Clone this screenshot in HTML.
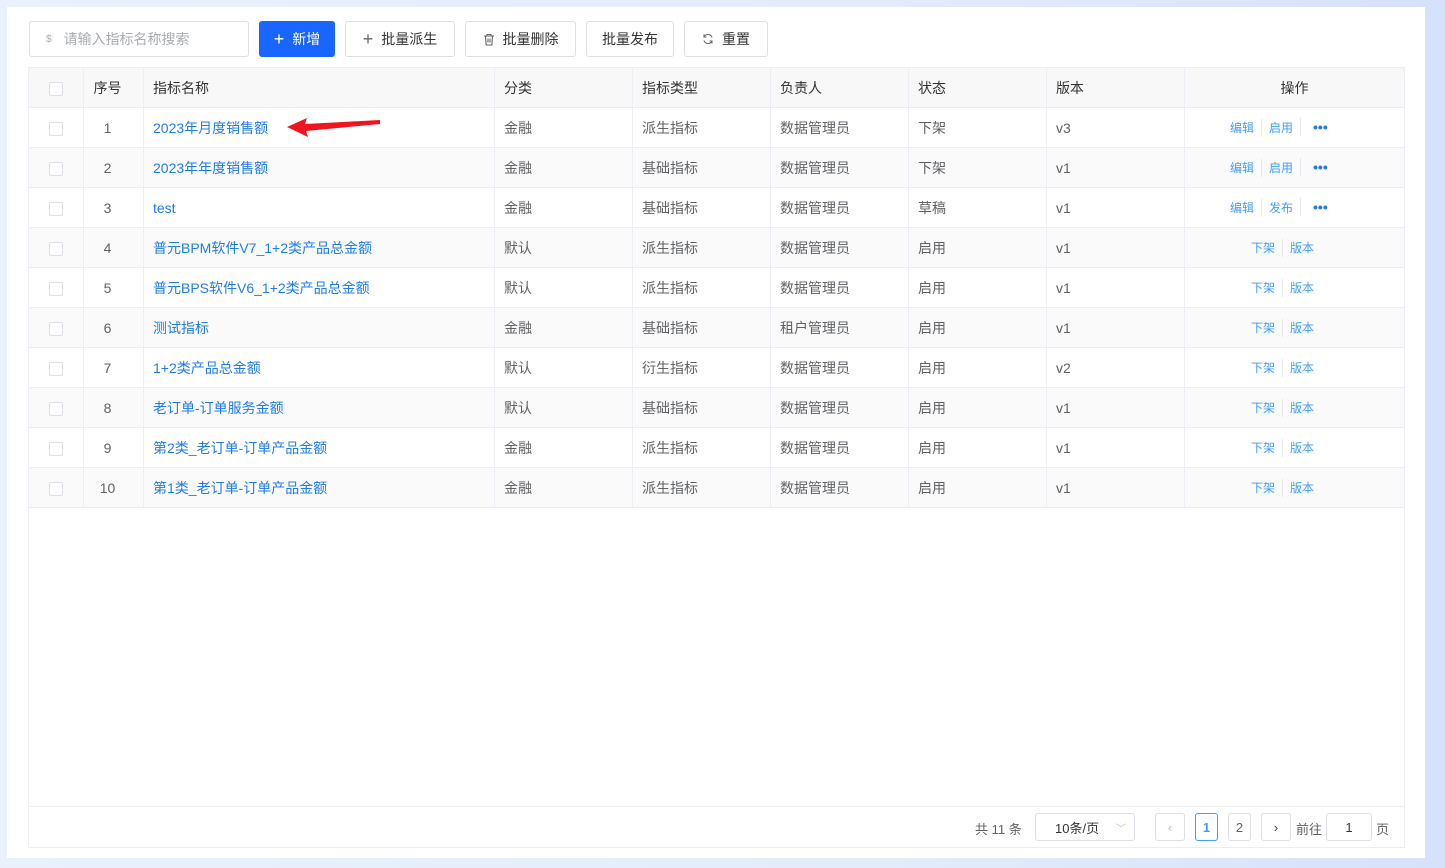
<!DOCTYPE html>
<html><head><meta charset="utf-8"><style>
*{box-sizing:border-box;margin:0;padding:0}
body{width:1445px;height:868px;overflow:hidden;background:linear-gradient(90deg,#e9f1fd,#e3ecfb 60%,#d6e2fb);font-family:"Liberation Sans","Noto Sans CJK SC",sans-serif;font-size:14px;color:#606266;position:relative}
.card{position:absolute;left:7px;top:7px;width:1418px;height:851px;background:#fff}
.btn{position:absolute;top:21px;height:36px;border:1px solid #dcdfe6;border-radius:3px;background:#fff;color:#333;font-size:14px;display:flex;align-items:center;justify-content:center;gap:8px}
.inp{position:absolute;left:29px;top:21px;width:220px;height:36px;border:1px solid #dcdfe6;border-radius:3px;color:#a8abb2;font-size:14px;display:flex;align-items:center;padding-left:16px}
table{position:absolute;left:28px;top:67px;border-collapse:collapse;table-layout:fixed}
td,th{height:40px;border:1px solid #ebeef5;font-weight:normal;text-align:left;padding-left:9px;font-size:14px;background:#fff}
th{background:#f8f8f9;color:#333}
tr.g td{background:#fafafa}
.c{text-align:center;padding-left:0}
.s{text-align:center;padding-left:0;padding-right:12px}
.cb{display:inline-block;width:14px;height:14px;border:1px solid #dcdfe6;border-radius:2px;background:#fff;vertical-align:middle}
a{color:#1f7cf0;text-decoration:none}
.ops{font-size:12px;color:#409eff;text-align:left;padding-left:38px}
.ops2{padding-left:59px}
.ops span{display:inline-block;padding:0 7px;border-left:1px solid #e4e7ed;line-height:18px}
.ops span:first-child{border-left:none}
.ops span.dots{padding-left:12px;font-size:14px;letter-spacing:0;color:#1f7cf0;font-weight:bold}
.box{position:absolute;left:28px;top:507px;width:1377px;height:341px;border:1px solid #ebeef5;border-top:none}
.foot{position:absolute;left:28px;top:806px;width:1377px;border-top:1px solid #ebeef5}
.pg{position:absolute;top:813px;height:28px;border:1px solid #dcdfe6;border-radius:3px;display:flex;align-items:center;justify-content:center;font-size:13px;color:#606266;background:#fff}
</style></head><body>
<div class="card"></div>
<div class="inp"><span style="font-size:10px;margin-right:12px">$</span>请输入指标名称搜索</div>
<div class="btn" style="left:259px;width:76px;background:#1966ff;border-color:#1966ff;color:#fff"><span style="font-size:18px;font-weight:300">+</span>新增</div>
<div class="btn" style="left:345px;width:110px"><span style="font-size:18px;font-weight:300;color:#666">+</span>批量派生</div>
<div class="btn" style="left:465px;width:111px"><svg width="12" height="13" viewBox="0 0 12 13" fill="none" stroke="#666" stroke-width="1.1"><path d="M1 3h10M4 3V1.5h4V3M2.5 3l.6 9h5.8l.6-9M5 5.5v4M7 5.5v4"/></svg>批量删除</div>
<div class="btn" style="left:586px;width:88px">批量发布</div>
<div class="btn" style="left:684px;width:84px"><svg width="12" height="12" viewBox="0 0 12 12" fill="none" stroke="#666" stroke-width="1.1"><path d="M10 4.5A4.3 4.3 0 0 0 2 4M2 7.5A4.3 4.3 0 0 0 10 8M2 1.5V4h2.5M10 10.5V8H7.5"/></svg>重置</div>
<table>
<colgroup><col width="55"><col width="60"><col width="351"><col width="138"><col width="138"><col width="138"><col width="138"><col width="138"><col width="220"></colgroup>
<tr><th class="c"><span class="cb"></span></th><th class="s">序号</th><th>指标名称</th><th>分类</th><th>指标类型</th><th>负责人</th><th>状态</th><th>版本</th><th class="c">操作</th></tr>
<tr><td class="c"><span class="cb"></span></td><td class="s">1</td><td><a>2023年月度销售额</a></td><td>金融</td><td>派生指标</td><td>数据管理员</td><td>下架</td><td>v3</td><td class="ops"><span>编辑</span><span>启用</span><span class="dots">•••</span></td></tr>
<tr class="g"><td class="c"><span class="cb"></span></td><td class="s">2</td><td><a>2023年年度销售额</a></td><td>金融</td><td>基础指标</td><td>数据管理员</td><td>下架</td><td>v1</td><td class="ops"><span>编辑</span><span>启用</span><span class="dots">•••</span></td></tr>
<tr><td class="c"><span class="cb"></span></td><td class="s">3</td><td><a>test</a></td><td>金融</td><td>基础指标</td><td>数据管理员</td><td>草稿</td><td>v1</td><td class="ops"><span>编辑</span><span>发布</span><span class="dots">•••</span></td></tr>
<tr class="g"><td class="c"><span class="cb"></span></td><td class="s">4</td><td><a>普元BPM软件V7_1+2类产品总金额</a></td><td>默认</td><td>派生指标</td><td>数据管理员</td><td>启用</td><td>v1</td><td class="ops ops2"><span>下架</span><span>版本</span></td></tr>
<tr><td class="c"><span class="cb"></span></td><td class="s">5</td><td><a>普元BPS软件V6_1+2类产品总金额</a></td><td>默认</td><td>派生指标</td><td>数据管理员</td><td>启用</td><td>v1</td><td class="ops ops2"><span>下架</span><span>版本</span></td></tr>
<tr class="g"><td class="c"><span class="cb"></span></td><td class="s">6</td><td><a>测试指标</a></td><td>金融</td><td>基础指标</td><td>租户管理员</td><td>启用</td><td>v1</td><td class="ops ops2"><span>下架</span><span>版本</span></td></tr>
<tr><td class="c"><span class="cb"></span></td><td class="s">7</td><td><a>1+2类产品总金额</a></td><td>默认</td><td>衍生指标</td><td>数据管理员</td><td>启用</td><td>v2</td><td class="ops ops2"><span>下架</span><span>版本</span></td></tr>
<tr class="g"><td class="c"><span class="cb"></span></td><td class="s">8</td><td><a>老订单-订单服务金额</a></td><td>默认</td><td>基础指标</td><td>数据管理员</td><td>启用</td><td>v1</td><td class="ops ops2"><span>下架</span><span>版本</span></td></tr>
<tr><td class="c"><span class="cb"></span></td><td class="s">9</td><td><a>第2类_老订单-订单产品金额</a></td><td>金融</td><td>派生指标</td><td>数据管理员</td><td>启用</td><td>v1</td><td class="ops ops2"><span>下架</span><span>版本</span></td></tr>
<tr class="g"><td class="c"><span class="cb"></span></td><td class="s">10</td><td><a>第1类_老订单-订单产品金额</a></td><td>金融</td><td>派生指标</td><td>数据管理员</td><td>启用</td><td>v1</td><td class="ops ops2"><span>下架</span><span>版本</span></td></tr>
</table>
<svg style="position:absolute;left:285px;top:115px" width="100" height="24"><path d="M2 12 L22 3 L20 9 L95 5 L95 9 L21 16 L23 22 Z" fill="#f0141e"/></svg>
<div class="box"></div>
<div class="foot"></div>
<div style="position:absolute;left:975px;top:819px;font-size:13px">共 11 条</div>
<div class="pg" style="left:1035px;width:100px;color:#333;justify-content:flex-start;padding-left:19px">10条/页<span style="position:absolute;right:8px;color:#c0c4cc;font-size:10px">﹀</span></div>
<div class="pg" style="left:1155px;width:30px;color:#c0c4cc">‹</div>
<div class="pg" style="left:1195px;width:23px;border-color:#409eff;color:#409eff;font-weight:bold">1</div>
<div class="pg" style="left:1228px;width:23px">2</div>
<div class="pg" style="left:1261px;width:30px;color:#333">›</div>
<div style="position:absolute;left:1296px;top:819px;font-size:13px">前往</div>
<div class="pg" style="left:1326px;width:46px;color:#333">1</div>
<div style="position:absolute;left:1376px;top:819px;font-size:13px">页</div>
</body></html>
